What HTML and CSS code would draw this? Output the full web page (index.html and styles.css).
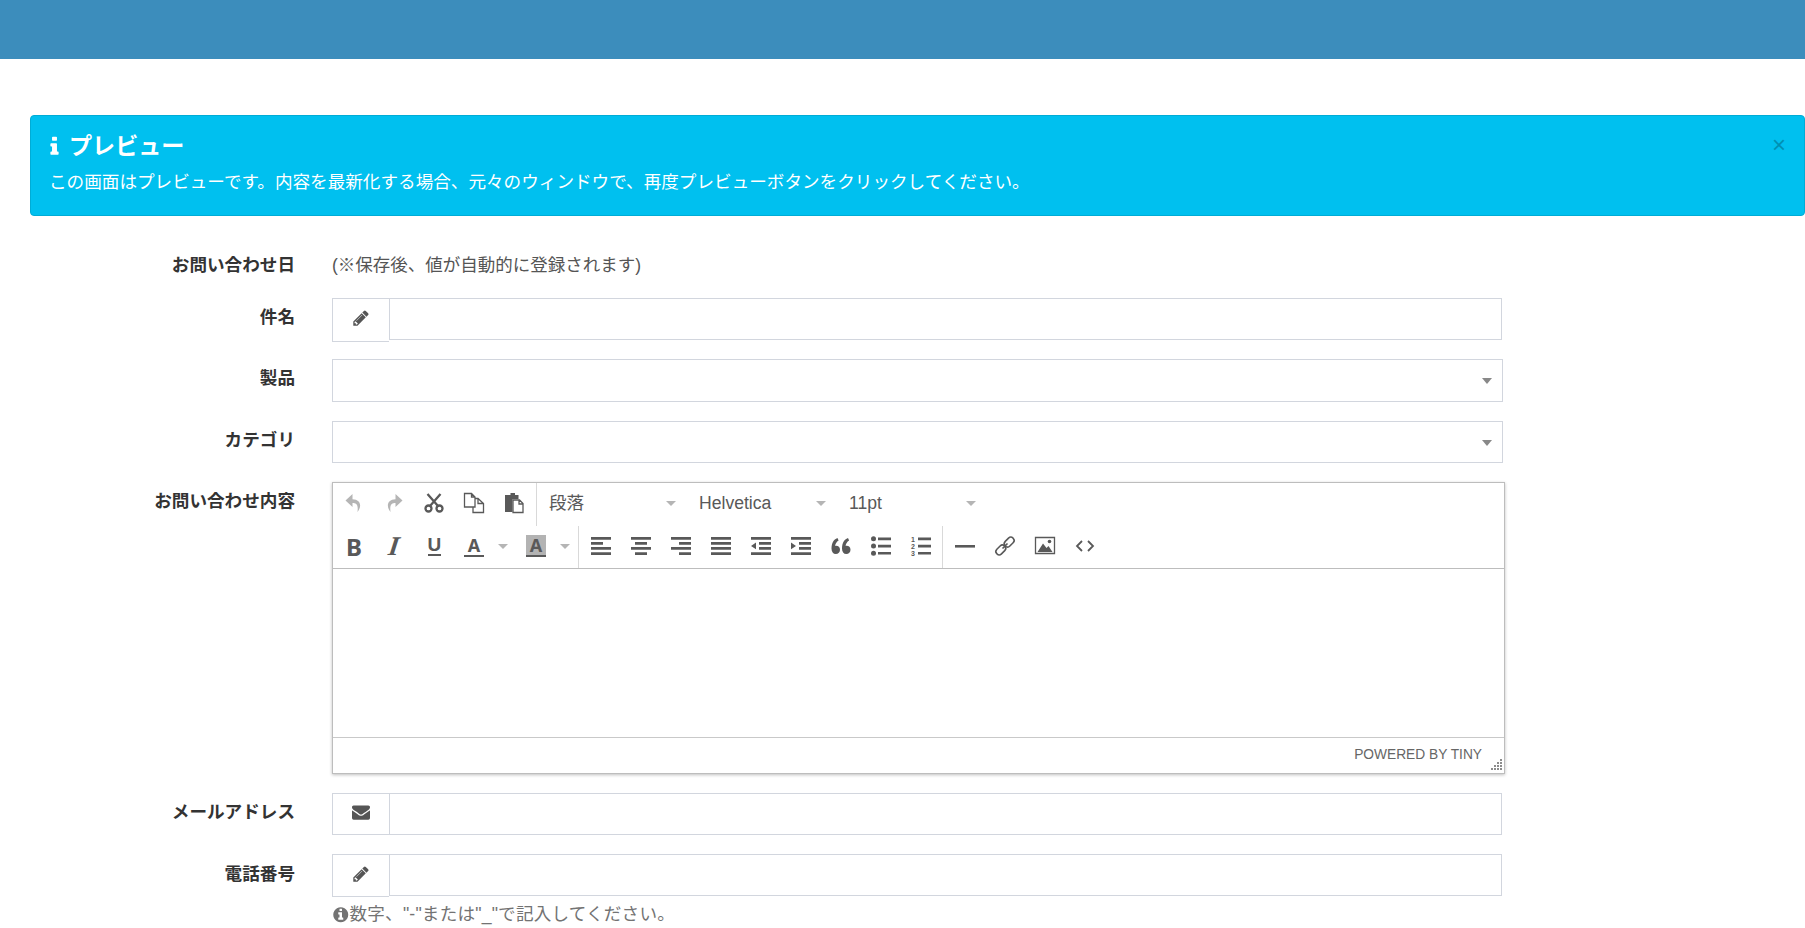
FILE: index.html
```html
<!DOCTYPE html>
<html lang="ja">
<head>
<meta charset="utf-8">
<title>プレビュー</title>
<link rel="stylesheet" href="styles.css">
</head>
<body>
<svg class="defs" width="0" height="0" aria-hidden="true">
  <defs>
    <symbol id="fa-pencil" viewBox="0 0 1792 1792"><path d="M491 1536l91-91-235-235-91 91v107h128v128h107zm523-928q0-22-22-22-10 0-17 7l-542 542q-7 7-7 17 0 22 22 22 10 0 17-7l542-542q7-7 7-17zm-54-192l416 416-832 832h-416v-416zm683 96q0 53-37 91l-166 166-416-416 166-165q36-38 91-38 53 0 91 38l235 234q37 39 37 90z"/></symbol>
    <symbol id="fa-envelope" viewBox="0 0 1792 1792"><path d="M1792 710v794q0 66-47 113t-113 47h-1472q-66 0-113-47t-47-113v-794q44 49 101 87 362 246 497 345 57 42 92.5 65.5t94.5 48 110 24.5h2q51 0 110-24.5t94.5-48 92.5-65.5q170-123 498-345 57-39 100-87zm0-294q0 79-49 151t-122 123q-376 261-468 325-10 7-42.5 30.5t-54 38-52 32.5-57.5 27-50 9h-2q-23 0-50-9t-57.5-27-52-32.5-54-38-42.5-30.5q-91-64-262-182.5t-205-142.5q-62-42-117-115.5t-55-136.5q0-78 41.5-130t118.5-52h1472q65 0 112.5 47t47.5 113z"/></symbol>
    <symbol id="fa-info-circle" viewBox="0 0 1792 1792"><path d="M1152 1376v-160q0-14-9-23t-23-9h-96v-512q0-14-9-23t-23-9h-320q-14 0-23 9t-9 23v160q0 14 9 23t23 9h96v320h-96q-14 0-23 9t-9 23v160q0 14 9 23t23 9h448q14 0 23-9t9-23zm-128-896v-160q0-14-9-23t-23-9h-192q-14 0-23 9t-9 23v160q0 14 9 23t23 9h192q14 0 23-9t9-23zm640 416q0 209-103 385.5t-279.5 279.5-385.5 103-385.5-103-279.5-279.5-103-385.5 103-385.5 279.5-279.5 385.5-103 385.5 103 279.5 279.5 103 385.5z"/></symbol>
    <symbol id="fa-info" viewBox="0 0 1792 1792"><path d="M1216 1344v128q0 26-19 45t-45 19h-512q-26 0-45-19t-19-45v-128q0-26 19-45t45-19h64v-384h-64q-26 0-45-19t-19-45v-128q0-26 19-45t45-19h384q26 0 45 19t19 45v576h64q26 0 45 19t19 45zm-128-1152v192q0 26-19 45t-45 19h-256q-26 0-45-19t-19-45v-192q0-26 19-45t45-19h256q26 0 45 19t19 45z"/></symbol>
  </defs>
</svg>

<header class="topbar"></header>

<main class="content">
  <section class="alert">
    <span class="alert-close">×</span>
    <h4 class="alert-title"><svg class="alert-icon"><use href="#fa-info"/></svg>プレビュー</h4>
    <p class="alert-text">この画面はプレビューです。内容を最新化する場合、元々のウィンドウで、再度プレビューボタンをクリックしてください。</p>
  </section>

  <form class="form">
    <div class="row row-static">
      <label class="label">お問い合わせ日</label>
      <div class="static">(※保存後、値が自動的に登録されます)</div>
    </div>

    <div class="row">
      <label class="label">件名</label>
      <div class="input-group">
        <span class="addon addon-tall"><svg class="fa"><use href="#fa-pencil"/></svg></span>
        <span class="input"></span>
      </div>
    </div>

    <div class="row">
      <label class="label">製品</label>
      <div class="select"><i class="select-caret"></i></div>
    </div>

    <div class="row">
      <label class="label">カテゴリ</label>
      <div class="select"><i class="select-caret"></i></div>
    </div>

    <div class="row">
      <label class="label">お問い合わせ内容</label>
      <div class="editor">
        <div class="toolbar">
          <div class="tb-row tb-row-1">
            <span class="btn"><svg class="ico ico-off" viewBox="0 0 20 20"><path d="M8.500 1 1.500 7.500l7 6.500V10c3.500 0 6 1 5 9 4.500-5.500 3.500-12.500-5-12.800z"/></svg></span>
            <span class="btn"><svg class="ico ico-off" viewBox="0 0 20 20"><path d="M11.500 1l7 6.500-7 6.500V10c-3.500 0-6 1-5 9C2 13.500 3 6.500 11.500 6.200z"/></svg></span>
            <span class="btn"><svg class="ico" viewBox="0 0 20 20"><path class="line" d="M3.500 1 14 13M16.500 1 6 13"/><circle class="line" cx="4.500" cy="15.500" r="3"/><circle class="line" cx="15.500" cy="15.500" r="3"/></svg></span>
            <span class="btn"><svg class="ico" viewBox="0 0 20 20"><path class="thin" d="M.5.500h7l3.500 3.500v10H.5zM7.500.5V4H11M11 5.500h3l5.500 5v9H9V14M14 5.500v5h5.500"/></svg></span>
            <span class="btn"><svg class="ico" viewBox="0 0 20 20"><path d="M6.500 0h4.500v2h3.500v4H8.500v13H1V2h5.500z"/><path class="thin" d="M9 7h6.500l3.500 3.500v9H9zM15 7.500v3.500h3.500"/></svg></span>
            <span class="sep"></span>
            <span class="listbox"><span>段落</span><i class="caret"></i></span>
            <span class="listbox"><span>Helvetica</span><i class="caret"></i></span>
            <span class="listbox"><span>11pt</span><i class="caret"></i></span>
          </div>
          <div class="tb-row tb-row-2">
            <span class="btn glyph glyph-b">B</span>
            <span class="btn glyph glyph-i">I</span>
            <span class="btn"><span class="glyph-u">U</span></span>
            <span class="btn"><span class="glyph-a">A</span></span>
            <span class="btn-caret"><i class="caret"></i></span>
            <span class="btn btn-gap"><span class="glyph-a glyph-hl">A</span></span>
            <span class="btn-caret"><i class="caret"></i></span>
            <span class="sep sep-2"></span>
            <span class="btn"><svg class="ico" viewBox="0 0 20 20"><path d="M0 1h20v2.800H0zM0 6h12v2.800H0zM0 11h20v2.800H0zM0 16.200h20v2.800H0z"/></svg></span>
            <span class="btn"><svg class="ico" viewBox="0 0 20 20"><path d="M0 1h20v2.800H0zM4 6h12v2.800H4zM0 11h20v2.800H0zM4 16.200h12v2.800H4z"/></svg></span>
            <span class="btn"><svg class="ico" viewBox="0 0 20 20"><path d="M0 1h20v2.800H0zM8 6h12v2.800H8zM0 11h20v2.800H0zM8 16.200h12v2.800H8z"/></svg></span>
            <span class="btn"><svg class="ico" viewBox="0 0 20 20"><path d="M0 1h20v2.800H0zM0 6h20v2.800H0zM0 11h20v2.800H0zM0 16.200h20v2.800H0z"/></svg></span>
            <span class="btn"><svg class="ico" viewBox="0 0 20 20"><path d="M0 1h20v2.800H0zM8 6h12v2.800H8zM8 11h12v2.800H8zM0 16.200h20v2.800H0zM0 9.900 5 6.500v6.800z"/></svg></span>
            <span class="btn"><svg class="ico" viewBox="0 0 20 20"><path d="M0 1h20v2.800H0zM8 6h12v2.800H8zM8 11h12v2.800H8zM0 16.200h20v2.800H0zM5 9.900 0 6.500v6.800z"/></svg></span>
            <span class="btn"><svg class="ico" viewBox="0 0 20 20"><path d="M6.500 2C2.500 3.500.5 7 .5 12.500c0 3.500 1.700 5.500 4.300 5.500 2.500 0 4.200-1.800 4.200-4.200s-1.600-4-3.900-4c-.3 0-.7 0-1 .1.300-2.200 1.400-4 3.500-5.400zM17 2c-4 1.500-6 5-6 10.500 0 3.500 1.700 5.500 4.300 5.500 2.500 0 4.200-1.800 4.200-4.200s-1.600-4-3.900-4c-.3 0-.7 0-1 .1.300-2.200 1.400-4 3.500-5.400z"/></svg></span>
            <span class="btn"><svg class="ico" viewBox="0 0 20 20"><circle cx="2.500" cy="2.800" r="2.500"/><circle cx="2.500" cy="10" r="2.500"/><circle cx="2.500" cy="17.200" r="2.500"/><path d="M7 1.600h13v2.600H7zM7 8.800h13v2.600H7zM7 16h13v2.600H7z"/></svg></span>
            <span class="btn"><svg class="ico" viewBox="0 0 20 20"><text class="nums" x="0" y="6">1</text><text class="nums" x="0" y="13">2</text><text class="nums" x="0" y="20">3</text><path d="M7 1.600h13v2.600H7zM7 8.800h13v2.600H7zM7 16h13v2.600H7z"/></svg></span>
            <span class="sep sep-3"></span>
            <span class="btn"><svg class="ico" viewBox="0 0 20 20"><path d="M0 9h20v2.600H0z"/></svg></span>
            <span class="btn"><svg class="ico" viewBox="0 0 20 20"><g class="link"><rect x=".3" y="10.700" width="11" height="6.500" rx="3.200" transform="rotate(-45 5.800 13.950)"/><rect x="8.700" y="2.800" width="11" height="6.500" rx="3.200" transform="rotate(-45 14.200 6.050)"/><path d="M7.500 12.500 12.500 7.500"/></g></svg></span>
            <span class="btn"><svg class="ico" viewBox="0 0 20 20"><path class="thin" d="M.5 1.500h19v16H.5z"/><path d="M2.500 16l5.500-8.500 3.500 4.500 2-2 4 6z"/><circle cx="14.500" cy="5.500" r="1.800"/></svg></span>
            <span class="btn"><svg class="ico" viewBox="0 0 20 20"><path class="thin2" d="M7 5 2 10l5 5M13 5l5 5-5 5"/></svg></span>
          </div>
        </div>
        <div class="editor-body"></div>
        <div class="statusbar"><span class="powered">POWERED BY TINY</span><svg class="grip" viewBox="0 0 12 12"><path d="M10 0h2v2h-2zM10 3h2v2h-2zM7 3h2v2H7zM10 6h2v2h-2zM7 6h2v2H7zM4 6h2v2H4zM10 9h2v2h-2zM7 9h2v2H7zM4 9h2v2H4zM1 9h2v2H1z"/></svg></div>
      </div>
    </div>

    <div class="row">
      <label class="label">メールアドレス</label>
      <div class="input-group">
        <span class="addon"><svg class="fa"><use href="#fa-envelope"/></svg></span>
        <span class="input"></span>
      </div>
    </div>

    <div class="row row-phone">
      <label class="label">電話番号</label>
      <div class="field">
        <div class="input-group">
          <span class="addon addon-tall"><svg class="fa"><use href="#fa-pencil"/></svg></span>
          <span class="input"></span>
        </div>
        <p class="help"><svg class="help-icon"><use href="#fa-info-circle"/></svg>数字、"-"または"_"で記入してください。</p>
      </div>
    </div>
  </form>
</main>
</body>
</html>
```

FILE: styles.css
```css
* { box-sizing: border-box; }
html, body { margin: 0; padding: 0; height: 100%; overflow: hidden; background: #fff; }
body {
  font-family: "Liberation Sans", "Noto Sans CJK JP", sans-serif;
  font-size: 17.6px;
  line-height: 25px;
  color: #333;
}
.defs { position: absolute; }

.topbar { height: 59px; background: #3c8dbc; }

.content { padding: 56px 0 0 30px; }

.alert {
  position: relative;
  height: 101px;
  padding: 18px 19px 0;
  background: #00c0ef;
  border: 1px solid #00acd6;
  border-radius: 4px;
  color: #fff;
}
.alert-close {
  position: absolute;
  top: 16px;
  right: 18px;
  font-size: 24px;
  line-height: 26px;
  color: #000;
  opacity: .25;
}
.alert-title {
  display: flex;
  align-items: center;
  margin: 0 0 11px;
  font-size: 23.1px;
  line-height: 25px;
  font-weight: 700;
}
.alert-icon { width: 23px; height: 23px; margin-right: 3px; margin-left: -7px; fill: #fff; }
.alert-text { margin: 0 0 0 -1px; }

.form { margin-top: 25px; }
.row { display: flex; gap: 37px; margin-bottom: 18.75px; }
.row-static { height: 38px; margin-bottom: 19px; padding-top: 12px; }
.row-phone { margin-top: 1px; }
.row-phone .label { padding-top: 8px; }
.label {
  flex: 0 0 265px;
  padding-top: 7px;
  text-align: right;
  font-weight: 700;
}
.row-static .label { padding-top: 0; }
.static { color: #555; font-size: 17.5px; }

.input-group { display: flex; align-items: flex-start; width: 1170px; height: 42.5px; }
.addon {
  display: flex;
  align-items: center;
  justify-content: center;
  flex: 0 0 57px;
  height: 42.5px;
  padding-bottom: 3px;
  border: 1px solid #d2d6de;
  border-right: 0;
}
.addon-tall { height: 43.5px; }
.input { flex: 1; height: 42px; border: 1px solid #d2d6de; }
.fa { width: 18px; height: 18px; fill: #555; }

.select {
  position: relative;
  width: 1171px;
  height: 42.5px;
  border: 1px solid #d2d6de;
}
.select-caret {
  position: absolute;
  top: 18px;
  right: 10px;
  border-top: 6px solid #888;
  border-left: 5px solid transparent;
  border-right: 5px solid transparent;
}

.editor {
  width: 1173px;
  height: 292px;
  display: flex;
  flex-direction: column;
  background: #fff;
  border: 1px solid #bdbdbd;
  box-shadow: 0 1px 3px rgba(0, 0, 0, .25);
  color: #595959;
}
.toolbar { border-bottom: 1px solid #bdbdbd; }
.tb-row { display: flex; padding-left: 1px; }
.tb-row-1 { height: 43px; }
.tb-row-1 .btn { padding-bottom: 3px; }
.tb-row-1 .listbox { padding-bottom: 1px; }
.tb-row-2 { height: 42px; }
.tb-row-2 .btn, .tb-row-2 .btn-caret { padding-bottom: 1px; }
.btn {
  flex: 0 0 40px;
  display: flex;
  align-items: center;
  justify-content: center;
  height: 100%;
}
.btn-gap { margin-left: 4px; }
.btn-caret { flex: 0 0 18px; display: flex; align-items: center; justify-content: center; }
.ico { width: 20px; height: 20px; fill: #595959; overflow: visible; }
.ico-off { fill: #b5b5b5; }
.line { fill: none; stroke: #595959; stroke-width: 2.3; }
.thin { fill: none; stroke: #595959; stroke-width: 1.3; }
.thin2 { fill: none; stroke: #595959; stroke-width: 1.8; }
.link { fill: none; stroke: #595959; stroke-width: 1.6; }
.nums { font-size: 7px; font-weight: 700; font-family: "Liberation Sans", sans-serif; fill: #595959; }
.sep { flex: 0 0 1px; margin-left: 2px; background: #d9d9d9; }
.sep-2 { margin: 0 2px 0 4px; }
.sep-3 { margin: 0 2px 0 1px; }
.listbox {
  flex: 0 0 150px;
  display: flex;
  align-items: center;
  justify-content: space-between;
  padding: 0 11px 0 12px;
  color: #595959;
}
.caret {
  display: block;
  border-top: 5px solid #b5b5b5;
  border-left: 5px solid transparent;
  border-right: 5px solid transparent;
}
.glyph { font-weight: 700; }
.glyph-b { font-family: "Noto Sans", sans-serif; font-size: 24px; }
.glyph-i { font-family: "Liberation Serif", serif; font-style: italic; font-size: 27px; transform: skewX(-8deg); }
.glyph-u {
  display: block;
  width: 13px;
  height: 20px;
  border-bottom: 2px solid #595959;
  font: 700 19px/18px "Liberation Sans", sans-serif;
  text-align: center;
}
.glyph-a {
  display: block;
  width: 20px;
  height: 22px;
  border-bottom: 2px solid #595959;
  font: 700 18px/20px "Noto Sans", sans-serif;
  text-align: center;
}
.glyph-hl { background: #b3b3b3; }

.editor-body { flex: 1; }
.statusbar {
  position: relative;
  flex: 0 0 36px;
  display: flex;
  align-items: center;
  justify-content: flex-end;
  padding: 0 22px 2px 0;
  border-top: 1px solid #c9c9c9;
}
.powered { font-size: 13.75px; color: #666; }
.grip { position: absolute; right: 2px; bottom: 2px; width: 12px; height: 12px; fill: #8c8c8c; }

.field { display: flex; flex-direction: column; }
.help { margin: 6px 0 0; color: #737373; white-space: nowrap; letter-spacing: .2px; }
.help-icon { width: 17.5px; height: 17.5px; fill: #737373; vertical-align: -3px; }
```
